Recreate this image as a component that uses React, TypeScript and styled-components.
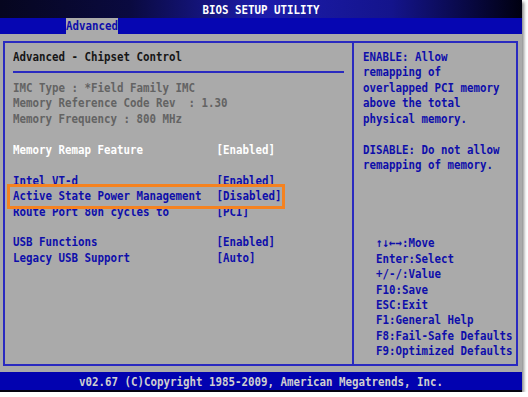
import styled, { createGlobalStyle } from 'styled-components';

const GlobalStyle = createGlobalStyle`
  html, body {
    margin: 0;
    padding: 0;
    background: #ffffff;
  }
`;

const BLUE_TEXT = '#0e0eaa';
const LINE = '#2a2ac0';
const GRAY = '#aaaaaa';

type Tone = 'blue' | 'white' | 'gray' | 'dark';

const toneColor = (t?: Tone) =>
  t === 'white' ? '#ffffff' : t === 'gray' ? '#636363' : t === 'dark' ? '#161616' : BLUE_TEXT;

const Screen = styled.div`
  position: relative;
  width: 522px;
  height: 392px;
  display: flex;
  flex-direction: column;
  background: ${GRAY};
  box-shadow: 2px 2px 3px rgba(0, 0, 0, 0.45);
  font-family: 'DejaVu Sans Mono', 'Liberation Mono', monospace;
  font-size: 10.8px;
  font-weight: bold;
`;

const Line = styled.div<{ $tone?: Tone }>`
  height: 15.45px;
  line-height: 15.45px;
  white-space: pre;
  transform: scaleY(1.18);
  color: ${p => toneColor(p.$tone)};
`;

// stretched inline label used in the bars
const BarText = styled.span<{ $color: string }>`
  display: inline-block;
  white-space: pre;
  transform: scaleY(1.18);
  color: ${p => p.$color};
`;

const TitleBar = styled.div`
  height: 18px;
  display: flex;
  align-items: center;
  justify-content: center;
  background: linear-gradient(90deg, #06061f 0%, #0a0a40 25%, #1c1cac 50%, #14148c 75%, #000010 100%);
`;

const TabBar = styled.div`
  height: 16px;
  display: flex;
  padding-left: 66px;
  background: #0606b2;
`;

const Tab = styled.div`
  background: ${GRAY};
  line-height: 16px;
  height: 16px;
  width: 52px;
`;

const Main = styled.div`
  flex: 1;
  margin: 7px 4px 6px 3px;
  border: 2px solid ${LINE};
  display: grid;
  grid-template-columns: 349px 1fr;
`;

const LeftPanel = styled.div`
  border-right: 2px solid ${LINE};
  padding-top: 6px;
`;

const Heading = styled.div`
  margin: 0 8px;
  padding-bottom: 7px;
  border-bottom: 2px solid ${LINE};
`;

const Rows = styled.div`
  margin-top: 6.6px;
  padding-left: 8px;
`;

const SettingRow = styled.div`
  display: grid;
  grid-template-columns: 203.5px 1fr;
`;

const RightPanel = styled.div`
  display: flex;
  flex-direction: column;
  justify-content: space-between;
  padding: 6px 0 5.3px 9px;
`;

const Keys = styled.div`
  margin-left: 13px;
`;

const Footer = styled.div`
  height: 18px;
  border-bottom: 2px solid #050510;
  background: #0202b0;
  display: flex;
  align-items: center;
  justify-content: center;
`;

const Highlight = styled.div`
  position: absolute;
  left: 7px;
  top: 184px;
  width: 272px;
  height: 19px;
  border: 3px solid #f5821f;
  pointer-events: none;
`;

type Setting = { label: string; value: string; tone?: Tone } | null;

const info = ['IMC Type : *Field Family IMC', 'Memory Reference Code Rev  : 1.30', 'Memory Frequency : 800 MHz'];

const settings: Setting[] = [
  null,
  { label: 'Memory Remap Feature', value: '[Enabled]', tone: 'white' },
  null,
  { label: 'Intel VT-d', value: '[Enabled]' },
  { label: 'Active State Power Management', value: '[Disabled]' },
  { label: 'Route Port 80h cycles to', value: '[PCI]' },
  null,
  { label: 'USB Functions', value: '[Enabled]' },
  { label: 'Legacy USB Support', value: '[Auto]' },
];

const help = [
  'ENABLE: Allow',
  'remapping of',
  'overlapped PCI memory',
  'above the total',
  'physical memory.',
  '',
  'DISABLE: Do not allow',
  'remapping of memory.',
];

const keys = [
  '\u2191\u2193\u2190\u2192:Move',
  'Enter:Select',
  '+/-/:Value',
  'F10:Save',
  'ESC:Exit',
  'F1:General Help',
  'F8:Fail-Safe Defaults',
  'F9:Optimized Defaults',
];

export default function App() {
  return (
    <>
      <GlobalStyle />
      <Screen>
        <TitleBar>
          <BarText $color="#ffffff">BIOS SETUP UTILITY</BarText>
        </TitleBar>
        <TabBar>
          <Tab>
            <BarText $color={BLUE_TEXT}>Advanced</BarText>
          </Tab>
        </TabBar>
        <Main>
          <LeftPanel>
            <Heading>
              <Line $tone="dark">Advanced - Chipset Control</Line>
            </Heading>
            <Rows>
              {info.map(t => (
                <Line key={t} $tone="gray">{t}</Line>
              ))}
              {settings.map((s, i) =>
                s ? (
                  <SettingRow key={i}>
                    <Line $tone={s.tone}>{s.label}</Line>
                    <Line $tone={s.tone}>{s.value}</Line>
                  </SettingRow>
                ) : (
                  <Line key={i} />
                )
              )}
            </Rows>
          </LeftPanel>
          <RightPanel>
            <div>
              {help.map((t, i) => (
                <Line key={i}>{t}</Line>
              ))}
            </div>
            <Keys>
              {keys.map(k => (
                <Line key={k}>{k}</Line>
              ))}
            </Keys>
          </RightPanel>
        </Main>
        <Footer>
          <BarText $color="#cfcfcf">v02.67 (C)Copyright 1985-2009, American Megatrends, Inc.</BarText>
        </Footer>
        <Highlight />
      </Screen>
    </>
  );
}
